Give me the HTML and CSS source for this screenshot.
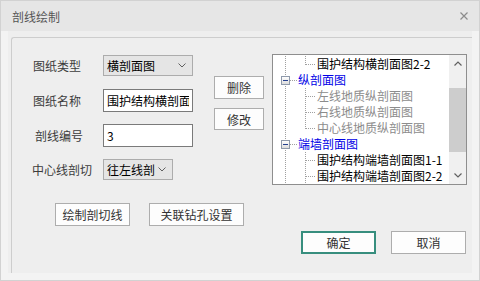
FILE: index.html
```html
<!DOCTYPE html>
<html lang="zh-CN">
<head>
  <meta charset="UTF-8">
  <title>剖线绘制</title>
  <link rel="stylesheet" href="styles.css">
</head>
<body>
  <div class="dialog">
    <div class="titlebar">
      <span class="title">剖线绘制</span>
      <svg class="close" width="8" height="8" viewBox="0 0 8 8"><path d="M0.5 0.5L7.5 7.5M7.5 0.5L0.5 7.5" stroke="#8c8c8c" stroke-width="1.2"/></svg>
    </div>
    <div class="client">
      <div class="panel">
        <div class="group">
          <div class="top">
            <div class="form">
              <div class="field">
                <label>图纸类型</label>
                <div class="combo combo-wide">
                  <span>横剖面图</span>
                  <svg width="8" height="5" viewBox="0 0 8 5"><path d="M0.5 0.5L4 4L7.5 0.5" fill="none" stroke="#606060"/></svg>
                </div>
              </div>
              <div class="field gap-13">
                <label>图纸名称</label>
                <input class="text" type="text" value="围护结构横剖面图1-1">
              </div>
              <div class="field gap-12">
                <label class="nudge">剖线编号</label>
                <input class="text" type="text" value="3">
              </div>
              <div class="field gap-12">
                <label class="pull">中心线剖切</label>
                <div class="combo combo-narrow">
                  <span>往左线剖</span>
                  <svg width="8" height="5" viewBox="0 0 8 5"><path d="M0.5 0.5L4 4L7.5 0.5" fill="none" stroke="#606060"/></svg>
                </div>
              </div>
            </div>
            <div class="side-buttons">
              <button class="btn small">删除</button>
              <button class="btn small second">修改</button>
            </div>
            <div class="tree">
              <div class="tree-list">
                <div class="row leaf">
                  <span class="g-root"></span><span class="g-child last"></span>
                  <span class="label">围护结构横剖面图2-2</span>
                </div>
                <div class="row node">
                  <span class="g-root"><span class="minus"></span></span>
                  <span class="label blue">纵剖面图</span>
                </div>
                <div class="row leaf">
                  <span class="g-root"></span><span class="g-child"></span>
                  <span class="label dim">左线地质纵剖面图</span>
                </div>
                <div class="row leaf">
                  <span class="g-root"></span><span class="g-child"></span>
                  <span class="label dim">右线地质纵剖面图</span>
                </div>
                <div class="row leaf">
                  <span class="g-root"></span><span class="g-child last"></span>
                  <span class="label dim">中心线地质纵剖面图</span>
                </div>
                <div class="row node">
                  <span class="g-root"><span class="minus"></span></span>
                  <span class="label blue">端墙剖面图</span>
                </div>
                <div class="row leaf">
                  <span class="g-root"></span><span class="g-child"></span>
                  <span class="label">围护结构端墙剖面图1-1</span>
                </div>
                <div class="row leaf">
                  <span class="g-root"></span><span class="g-child"></span>
                  <span class="label">围护结构端墙剖面图2-2</span>
                </div>
              </div>
              <div class="scrollbar">
                <div class="arrow">
                  <svg width="8" height="5" viewBox="0 0 8 5"><path d="M0.5 4.5L4 1L7.5 4.5" fill="none" stroke="#606060" stroke-width="1.2"/></svg>
                </div>
                <div class="track"><div class="thumb"></div></div>
                <div class="arrow">
                  <svg width="8" height="5" viewBox="0 0 8 5"><path d="M0.5 0.5L4 4L7.5 0.5" fill="none" stroke="#606060" stroke-width="1.2"/></svg>
                </div>
              </div>
            </div>
          </div>
          <div class="tools">
            <button class="btn tool">绘制剖切线</button>
            <button class="btn tool wide">关联钻孔设置</button>
          </div>
          <div class="actions">
            <button class="btn action primary">确定</button>
            <button class="btn action">取消</button>
          </div>
        </div>
      </div>
    </div>
  </div>
</body>
</html>
```

FILE: styles.css
```css
/* Dialog frame */
body {
  margin: 0;
  font-family: "Noto Sans CJK SC", sans-serif;
  font-size: 12px;
  color: #333;
}

.dialog {
  width: 480px;
  height: 281px;
  box-sizing: border-box;
  border: 1px solid #d2d2d2;
  background: #f3f3f3;
  display: flex;
  flex-direction: column;
}

.titlebar {
  height: 30px;
  flex: none;
  background: #e6e6e6;
  display: flex;
  align-items: center;
  justify-content: space-between;
  padding: 0 11px;
  color: #555;
}

.client {
  flex: 1;
  display: flex;
  padding: 0 7px 7px;
}

.panel {
  flex: 1;
  display: flex;
  background: #eeeeee;
  padding: 6px 0 0 3px;
}

.group {
  flex: 1;
  border-top: 1px solid #cdcdcd;
  border-left: 1px solid #cdcdcd;
  border-top-left-radius: 3px;
}

.top {
  display: flex;
  align-items: flex-start;
}

/* Form fields */
.form {
  display: flex;
  flex-direction: column;
  padding: 17px 0 0 21px;
}

.field {
  display: flex;
  align-items: center;
}

.field label {
  width: 70px;
  color: #3c3c3c;
}

.field label.nudge { padding-left: 2px; width: 68px; }
.field label.pull { margin-left: -1px; width: 71px; }

.gap-13 { margin-top: 13px; }
.gap-12 { margin-top: 12px; }

.combo {
  height: 21px;
  box-sizing: border-box;
  border: 1px solid #acacac;
  background: #e5e5e5;
  color: #000;
  display: flex;
  align-items: center;
  justify-content: space-between;
  padding: 0 6px 0 3px;
}

.combo-wide { width: 90px; }
.combo-narrow { width: 70px; }

.text {
  width: 90px;
  height: 23px;
  box-sizing: border-box;
  border: 1px solid #7a7a7a;
  background: #fff;
  padding: 0 3px;
  margin: 0;
  font: inherit;
  color: #000;
  outline: none;
}

/* Buttons */
.btn {
  font: inherit;
  color: #333;
  background: #fdfdfd;
  border: 1px solid #adadad;
  padding: 0;
  box-sizing: border-box;
}

.side-buttons {
  display: flex;
  flex-direction: column;
  margin: 38px 0 0 21px;
}

.small {
  width: 50px;
  height: 23px;
}

.small.second {
  margin-top: 9px;
  height: 22px;
}

.tools {
  display: flex;
  gap: 19px;
  margin-top: 18px;
  padding-left: 43px;
}

.tool {
  width: 75px;
  height: 23px;
}

.tool.wide { width: 95px; }

.actions {
  display: flex;
  justify-content: flex-end;
  gap: 15px;
  margin-top: 5px;
  padding-right: 6px;
}

.action {
  width: 75px;
  height: 23px;
}

.action.primary {
  border: 2px solid #378e7e;
}

/* Tree view */
.tree {
  display: flex;
  width: 195px;
  height: 131px;
  box-sizing: border-box;
  margin: 16px 0 0 8px;
  border: 1px solid #8e8e8e;
  background: #fff;
}

.tree-list {
  flex: 1;
  overflow: hidden;
  padding-top: 1px;
}

.row {
  display: flex;
  height: 16px;
  line-height: 16px;
  white-space: nowrap;
}

.g-root {
  flex: none;
  width: 24px;
  height: 16px;
  display: flex;
  align-items: center;
  background: repeating-linear-gradient(to bottom, #a0a0a0 0 1px, transparent 1px 2px) 12px 0 / 1px 16px no-repeat;
}

.node .g-root {
  width: 25px;
  background:
    repeating-linear-gradient(to bottom, #a0a0a0 0 1px, transparent 1px 2px) 12px 0 / 1px 16px no-repeat,
    repeating-linear-gradient(to right, #a0a0a0 0 1px, transparent 1px 2px) 17px 8px / 7px 1px no-repeat;
}

.g-child {
  flex: none;
  width: 20px;
  height: 16px;
  background:
    repeating-linear-gradient(to bottom, #a0a0a0 0 1px, transparent 1px 2px) 8px 0 / 1px 16px no-repeat,
    repeating-linear-gradient(to right, #a0a0a0 0 1px, transparent 1px 2px) 9px 8px / 9px 1px no-repeat;
}

.g-child.last {
  background:
    repeating-linear-gradient(to bottom, #a0a0a0 0 1px, transparent 1px 2px) 8px 0 / 1px 9px no-repeat,
    repeating-linear-gradient(to right, #a0a0a0 0 1px, transparent 1px 2px) 9px 8px / 9px 1px no-repeat;
}

.minus {
  width: 9px;
  height: 9px;
  box-sizing: border-box;
  margin: 1px 0 0 8px;
  border: 1px solid #8f9aab;
  background:
    linear-gradient(#25408f, #25408f) 1px 3px / 5px 1px no-repeat,
    linear-gradient(#ffffff, #dcdcdc);
}

.label { color: #000; }
.label.blue { color: #0000e6; }
.label.dim { color: #8c8c8c; }

.scrollbar {
  flex: none;
  width: 17px;
  display: flex;
  flex-direction: column;
  background: #f0f0f0;
}

.arrow {
  height: 17px;
  display: flex;
  align-items: center;
  justify-content: center;
}

.track {
  flex: 1;
}

.thumb {
  margin-top: 16px;
  height: 64px;
  background: #cdcdcd;
}
```
